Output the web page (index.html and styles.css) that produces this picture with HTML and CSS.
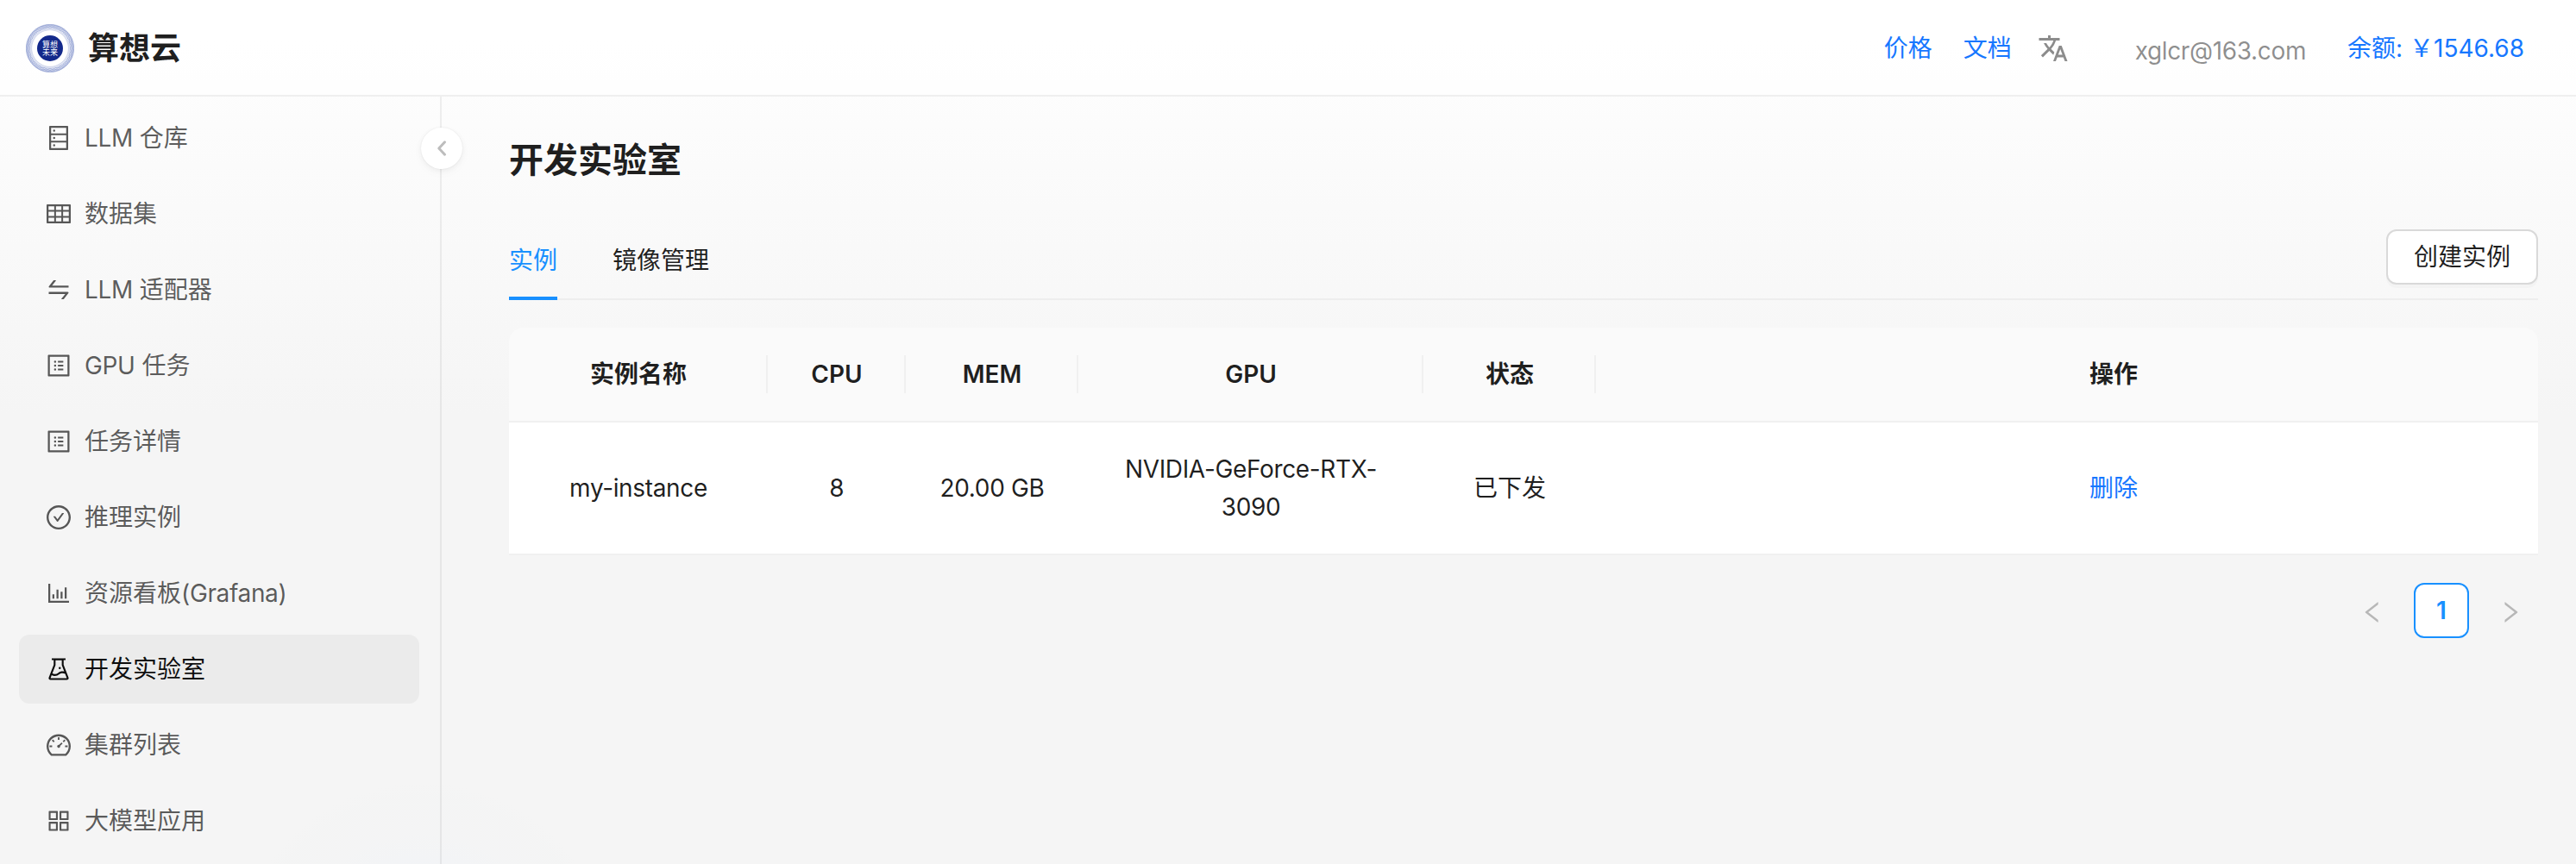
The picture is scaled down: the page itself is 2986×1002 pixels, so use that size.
FILE: index.html
```html
<!DOCTYPE html>
<html lang="zh-CN">
<head>
<meta charset="utf-8">
<title>开发实验室 - 算想云</title>
<link rel="stylesheet" href="styles.css">
</head>
<body>
<div class="layout">
  <header class="header">
    <a class="brand">
      <svg class="brand-logo" viewBox="0 0 56 56">
        <circle cx="28" cy="28" r="27.8" fill="#eef1fa"/>
        <g fill="none" stroke="#7485c4" stroke-width=".4">
          <ellipse cx="28" cy="28" rx="27.7" ry="21"/>
          <ellipse cx="28" cy="28" rx="27.7" ry="21" transform="rotate(15 28 28)"/>
          <ellipse cx="28" cy="28" rx="27.7" ry="21" transform="rotate(30 28 28)"/>
          <ellipse cx="28" cy="28" rx="27.7" ry="21" transform="rotate(45 28 28)"/>
          <ellipse cx="28" cy="28" rx="27.7" ry="21" transform="rotate(60 28 28)"/>
          <ellipse cx="28" cy="28" rx="27.7" ry="21" transform="rotate(75 28 28)"/>
          <ellipse cx="28" cy="28" rx="27.7" ry="21" transform="rotate(90 28 28)"/>
          <ellipse cx="28" cy="28" rx="27.7" ry="21" transform="rotate(105 28 28)"/>
          <ellipse cx="28" cy="28" rx="27.7" ry="21" transform="rotate(120 28 28)"/>
          <ellipse cx="28" cy="28" rx="27.7" ry="21" transform="rotate(135 28 28)"/>
          <ellipse cx="28" cy="28" rx="27.7" ry="21" transform="rotate(150 28 28)"/>
          <ellipse cx="28" cy="28" rx="27.7" ry="21" transform="rotate(165 28 28)"/>
        </g>
        <circle cx="28" cy="28" r="23.2" fill="#fff" opacity=".6"/>
        <circle cx="28" cy="28" r="20.8" fill="#fff"/>
        <circle cx="28" cy="28" r="15" fill="#13298b"/>
        <text class="brand-mark" x="28" y="26.6">算想</text>
        <text class="brand-mark" x="28" y="36.4">未来</text>
      </svg>
      <h1 class="brand-name">算想云</h1>
    </a>
    <nav class="header-actions">
      <a class="link">价格</a>
      <a class="link docs">文档</a>
      <svg class="lang" viewBox="0 0 24 24"><path d="M12.87 15.07l-2.54-2.51.03-.03c1.74-1.94 2.98-4.17 3.71-6.53H17V4h-7V2H8v2H1v1.99h11.17C11.5 7.92 10.44 9.75 9 11.35 8.07 10.32 7.3 9.19 6.69 8h-2c.73 1.63 1.73 3.17 2.98 4.56l-5.09 5.02L4 19l5-5 3.11 3.11.76-2.04zM18.5 10h-2L12 22h2l1.12-3h4.75L21 22h2l-4.5-12zm-2.62 7l1.62-4.33L19.12 17h-3.24z"/></svg>
      <span class="account latin">xglcr@163.com</span>
      <a class="link balance">余额: ￥1546.68</a>
    </nav>
  </header>
  <div class="body">
    <aside class="sider">
      <ul class="menu">
        <li class="menu-item"><svg class="icon" viewBox="64 64 896 896"><path d="M832 64H192c-17.7 0-32 14.3-32 32v832c0 17.7 14.3 32 32 32h640c17.7 0 32-14.3 32-32V96c0-17.7-14.3-32-32-32zm-600 72h560v208H232V136zm560 480H232V408h560v208zm0 272H232V680h560v208zM304 240a40 40 0 1080 0 40 40 0 10-80 0zm0 272a40 40 0 1080 0 40 40 0 10-80 0zm0 272a40 40 0 1080 0 40 40 0 10-80 0z"/></svg><span><span class="latin">LLM</span> 仓库</span></li>
        <li class="menu-item"><svg class="icon" viewBox="64 64 896 896"><path d="M928 160H96c-17.7 0-32 14.3-32 32v640c0 17.7 14.3 32 32 32h832c17.7 0 32-14.3 32-32V192c0-17.7-14.3-32-32-32zm-40 208H676V232h212v136zm0 224H676V432h212v160zM412 432h200v160H412V432zm200-64H412V232h200v136zm-476 64h212v160H136V432zm0-200h212v136H136V232zm0 424h212v136H136V656zm276 0h200v136H412V656zm476 136H676V656h212v136z"/></svg><span>数据集</span></li>
        <li class="menu-item"><svg class="icon" viewBox="64 64 896 896"><path d="M847.9 592H152c-4.4 0-8 3.6-8 8v60c0 4.4 3.6 8 8 8h605.2L612.9 851c-4.1 5.2-.4 13 6.3 13h72.5c4.9 0 9.5-2.2 12.6-6.1l168.8-214.1c16.5-21 1.6-51.8-25.2-51.8zM872 356H266.8l144.3-183c4.1-5.2.4-13-6.3-13h-72.5c-4.9 0-9.5 2.2-12.6 6.1L150.9 380.2c-16.5 21-1.6 51.8 25.1 51.8h696c4.4 0 8-3.6 8-8v-60c0-4.4-3.6-8-8-8z"/></svg><span><span class="latin">LLM</span> 适配器</span></li>
        <li class="menu-item"><svg class="icon" viewBox="64 64 896 896"><path d="M880 112H144c-17.7 0-32 14.3-32 32v736c0 17.7 14.3 32 32 32h736c17.7 0 32-14.3 32-32V144c0-17.7-14.3-32-32-32zm-40 728H184V184h656v656zM492 400h184c4.4 0 8-3.6 8-8v-48c0-4.4-3.6-8-8-8H492c-4.4 0-8 3.6-8 8v48c0 4.4 3.6 8 8 8zm0 144h184c4.4 0 8-3.6 8-8v-48c0-4.4-3.6-8-8-8H492c-4.4 0-8 3.6-8 8v48c0 4.4 3.6 8 8 8zm0 144h184c4.4 0 8-3.6 8-8v-48c0-4.4-3.6-8-8-8H492c-4.4 0-8 3.6-8 8v48c0 4.4 3.6 8 8 8zM340 368a40 40 0 1080 0 40 40 0 10-80 0zm0 144a40 40 0 1080 0 40 40 0 10-80 0zm0 144a40 40 0 1080 0 40 40 0 10-80 0z"/></svg><span><span class="latin">GPU</span> 任务</span></li>
        <li class="menu-item"><svg class="icon" viewBox="64 64 896 896"><path d="M880 112H144c-17.7 0-32 14.3-32 32v736c0 17.7 14.3 32 32 32h736c17.7 0 32-14.3 32-32V144c0-17.7-14.3-32-32-32zm-40 728H184V184h656v656zM492 400h184c4.4 0 8-3.6 8-8v-48c0-4.4-3.6-8-8-8H492c-4.4 0-8 3.6-8 8v48c0 4.4 3.6 8 8 8zm0 144h184c4.4 0 8-3.6 8-8v-48c0-4.4-3.6-8-8-8H492c-4.4 0-8 3.6-8 8v48c0 4.4 3.6 8 8 8zm0 144h184c4.4 0 8-3.6 8-8v-48c0-4.4-3.6-8-8-8H492c-4.4 0-8 3.6-8 8v48c0 4.4 3.6 8 8 8zM340 368a40 40 0 1080 0 40 40 0 10-80 0zm0 144a40 40 0 1080 0 40 40 0 10-80 0zm0 144a40 40 0 1080 0 40 40 0 10-80 0z"/></svg><span>任务详情</span></li>
        <li class="menu-item"><svg class="icon" viewBox="64 64 896 896"><path d="M699 353h-46.9c-10.2 0-19.9 4.9-25.9 13.3L469 584.3l-71.2-98.8c-6-8.3-15.6-13.3-25.9-13.3H325c-6.5 0-10.3 7.4-6.5 12.7l124.6 172.8a31.8 31.8 0 0051.7 0l210.6-292c3.9-5.3.1-12.7-6.4-12.7z"/><path d="M512 64C264.6 64 64 264.6 64 512s200.6 448 448 448 448-200.6 448-448S759.4 64 512 64zm0 820c-205.4 0-372-166.6-372-372s166.6-372 372-372 372 166.6 372 372-166.6 372-372 372z"/></svg><span>推理实例</span></li>
        <li class="menu-item"><svg class="icon" viewBox="64 64 896 896"><path d="M888 792H200V168c0-4.4-3.6-8-8-8h-56c-4.4 0-8 3.6-8 8v688c0 4.4 3.6 8 8 8h752c4.4 0 8-3.6 8-8v-56c0-4.4-3.6-8-8-8zm-600-80h56c4.4 0 8-3.6 8-8V560c0-4.4-3.6-8-8-8h-56c-4.4 0-8 3.6-8 8v144c0 4.4 3.6 8 8 8zm152 0h56c4.4 0 8-3.6 8-8V384c0-4.4-3.6-8-8-8h-56c-4.4 0-8 3.6-8 8v320c0 4.4 3.6 8 8 8zm152 0h56c4.4 0 8-3.6 8-8V462c0-4.4-3.6-8-8-8h-56c-4.4 0-8 3.6-8 8v242c0 4.4 3.6 8 8 8zm152 0h56c4.4 0 8-3.6 8-8V304c0-4.4-3.6-8-8-8h-56c-4.4 0-8 3.6-8 8v400c0 4.4 3.6 8 8 8z"/></svg><span>资源看板<span class="latin">(Grafana)</span></span></li>
        <li class="menu-item selected"><svg class="icon" viewBox="64 64 896 896"><path d="M512 472a40 40 0 1080 0 40 40 0 10-80 0zm367 352.9L696.3 352V178H768v-68H256v68h71.7v174L145 824.9c-2.8 7.4-4.3 15.2-4.3 23.1 0 35.3 28.7 64 64 64h614.6c7.9 0 15.7-1.5 23.1-4.3 33-12.7 49.4-49.8 36.6-82.8zM395.7 364.7V180h232.6v184.7L719.2 600c-20.7-5.3-42.1-8-63.9-8-61.2 0-119.2 21.5-165.3 60a188.78 188.78 0 01-121.3 43.9c-32.7 0-64.1-8.3-91.8-23.7l118.8-307.5zM210.5 844l41.7-107.8c35.7 18.1 75.4 27.8 116.6 27.8 61.2 0 119.2-21.5 165.3-60 33.9-28.2 76.3-43.9 121.3-43.9 35 0 68.4 9.5 97.6 27.1L813.5 844h-603z"/></svg><span>开发实验室</span></li>
        <li class="menu-item"><svg class="icon" viewBox="64 64 896 896"><path d="M924.8 385.6a446.7 446.7 0 00-96-142.4 446.7 446.7 0 00-142.4-96C631.1 123.8 572.5 112 512 112s-119.1 11.8-174.4 35.2a446.7 446.7 0 00-142.4 96 446.7 446.7 0 00-96 142.4C75.8 440.9 64 499.5 64 560c0 132.7 58.3 257.7 159.9 343.1l1.7 1.4c5.8 4.8 13.1 7.5 20.6 7.5h531.7c7.5 0 14.8-2.7 20.6-7.5l1.7-1.4C901.7 817.7 960 692.7 960 560c0-60.5-11.9-119.1-35.2-174.4zM761.4 836H262.6A371.12 371.12 0 01140 560c0-99.4 38.7-192.8 109-263 70.3-70.3 163.7-109 263-109 99.4 0 192.8 38.7 263 109 70.3 70.3 109 163.7 109 263 0 105.6-44.5 205.5-122.6 276zM623.5 421.5a8.03 8.03 0 00-11.3 0L527.7 506c-18.7-5-39.4-.2-54.1 14.5a55.95 55.95 0 000 79.2 55.95 55.95 0 0079.2 0 55.87 55.87 0 0014.5-54.1l84.5-84.5c3.1-3.1 3.1-8.2 0-11.3l-28.3-28.3zM490 320h44c4.4 0 8-3.6 8-8v-80c0-4.4-3.6-8-8-8h-44c-4.4 0-8 3.6-8 8v80c0 4.4 3.6 8 8 8zm260 218v44c0 4.4 3.6 8 8 8h80c4.4 0 8-3.6 8-8v-44c0-4.4-3.6-8-8-8h-80c-4.4 0-8 3.6-8 8zm12.7-197.2l-31.1-31.1a8.03 8.03 0 00-11.3 0l-56.6 56.6a8.03 8.03 0 000 11.3l31.1 31.1c3.1 3.1 8.2 3.1 11.3 0l56.6-56.6c3.1-3.1 3.1-8.2 0-11.3zm-458.6-31.1a8.03 8.03 0 00-11.3 0l-31.1 31.1a8.03 8.03 0 000 11.3l56.6 56.6c3.1 3.1 8.2 3.1 11.3 0l31.1-31.1c3.1-3.1 3.1-8.2 0-11.3l-56.6-56.6zM262 530h-80c-4.4 0-8 3.6-8 8v44c0 4.4 3.6 8 8 8h80c4.4 0 8-3.6 8-8v-44c0-4.4-3.6-8-8-8z"/></svg><span>集群列表</span></li>
        <li class="menu-item"><svg class="icon" viewBox="64 64 896 896"><path d="M464 144H160c-8.8 0-16 7.2-16 16v304c0 8.8 7.2 16 16 16h304c8.8 0 16-7.2 16-16V160c0-8.8-7.2-16-16-16zm-52 268H212V212h200v200zm452-268H560c-8.8 0-16 7.2-16 16v304c0 8.8 7.2 16 16 16h304c8.8 0 16-7.2 16-16V160c0-8.8-7.2-16-16-16zm-52 268H612V212h200v200zM464 544H160c-8.8 0-16 7.2-16 16v304c0 8.8 7.2 16 16 16h304c8.8 0 16-7.2 16-16V560c0-8.8-7.2-16-16-16zm-52 268H212V612h200v200zm452-268H560c-8.8 0-16 7.2-16 16v304c0 8.8 7.2 16 16 16h304c8.8 0 16-7.2 16-16V560c0-8.8-7.2-16-16-16zm-52 268H612V612h200v200z"/></svg><span>大模型应用</span></li>
      </ul>
      <button class="collapse" aria-label="收起"><svg viewBox="0 0 24 24"><path d="M15.5 4.8L8.8 12l6.7 7.2"/></svg></button>
    </aside>
    <main class="content">
      <h2 class="page-title">开发实验室</h2>
      <div class="tabs">
        <div class="tab active">实例</div>
        <div class="tab">镜像管理</div>
        <button class="create">创建实例</button>
      </div>
      <table class="table">
        <colgroup><col class="c300"><col class="c160"><col class="c200"><col class="c400"><col class="c200"><col></colgroup>
        <thead><tr><th>实例名称</th><th>CPU</th><th>MEM</th><th>GPU</th><th>状态</th><th class="action">操作</th></tr></thead>
        <tbody><tr><td class="latin">my-instance</td><td>8</td><td class="latin">20.00 GB</td><td class="latin">NVIDIA-GeForce-RTX-3090</td><td>已下发</td><td class="action"><a class="link">删除</a></td></tr></tbody>
      </table>
      <div class="pagination">
        <span class="page-nav"><svg viewBox="64 64 896 896"><path d="M724 218.3V141c0-6.7-7.7-10.4-12.9-6.3L260.3 486.8a31.86 31.86 0 000 50.3l450.8 352.1c5.3 4.1 12.9.4 12.9-6.3v-77.3c0-4.9-2.3-9.6-6.1-12.6l-360-281 360-281.1c3.8-3 6.1-7.7 6.1-12.6z"/></svg></span>
        <span class="page-current">1</span>
        <span class="page-nav"><svg viewBox="64 64 896 896"><path d="M765.7 486.8L314.9 134.7A7.97 7.97 0 00302 141v77.3c0 4.9 2.3 9.6 6.1 12.6l360 281.1-360 281.1c-3.9 3-6.1 7.7-6.1 12.6V883c0 6.7 7.7 10.4 12.9 6.3l450.8-352.1a31.96 31.96 0 000-50.4z"/></svg></span>
      </div>
    </main>
  </div>
</div>
</body>
</html>
```
FILE: styles.css
```css
* { box-sizing: border-box; }
body {
  margin: 0;
  font-family: Inter, "Noto Sans CJK SC", sans-serif;
  font-size: 28px;
  line-height: 44px;
  color: rgba(0, 0, 0, .88);
}
h1, h2, ul { margin: 0; padding: 0; }
button { font: inherit; color: inherit; padding: 0; }
.latin { letter-spacing: -.35px; }
.layout {
  display: flex;
  flex-direction: column;
  height: 1002px;
  overflow: hidden;
  background:
    radial-gradient(circle 218px at 490px 1125px, rgba(240, 243, 248, .6) 50%, rgba(243, 244, 245, .5) 72%, rgba(243, 244, 244, .5) 92%, rgba(245, 245, 245, 0)),
    linear-gradient(#fff, #f5f5f5 481px);
}
.link { color: #1677ff; }

.header {
  flex: none;
  display: flex;
  align-items: center;
  justify-content: space-between;
  height: 112px;
  padding: 0 60px 0 30px;
  background: rgba(255, 255, 255, .6);
  border-bottom: 2px solid rgba(5, 5, 5, .06);
}
.brand { display: flex; align-items: center; gap: 16px; padding-top: 2px; }
.brand-logo { width: 56px; height: 56px; }
.brand-mark { font-size: 9px; fill: #fff; text-anchor: middle; }
.brand-name { font-size: 36px; font-weight: 600; line-height: 56px; }
.header-actions { display: flex; align-items: center; padding-top: 2px; }
.docs { margin-left: 36px; }
.lang { width: 36px; height: 36px; margin-left: 30px; fill: #8c8c8c; }
.account { margin: 6px 0 0 77px; color: rgba(0, 0, 0, .45); }
.balance { margin-left: 48px; }

.body { flex: 1; display: flex; min-height: 0; }
.sider {
  position: relative;
  flex: none;
  width: 512px;
  padding: 8px 24px 0 22px;
  border-right: 2px solid rgba(5, 5, 5, .06);
}
.menu { display: flex; flex-direction: column; gap: 8px; list-style: none; }
.menu-item {
  display: flex;
  align-items: center;
  gap: 16px;
  height: 80px;
  padding: 0 32px;
  border-radius: 12px;
  color: rgba(0, 0, 0, .65);
}
.menu-item.selected { background: rgba(0, 0, 0, .04); color: rgba(0, 0, 0, .95); }
.icon { width: 28px; height: 28px; fill: currentColor; }
.collapse {
  position: absolute;
  top: 36px;
  right: -26px;
  display: grid;
  place-items: center;
  width: 48px;
  height: 48px;
  border: 0;
  border-radius: 50%;
  background: #fff;
  box-shadow: 0 4px 16px -4px rgba(0, 0, 0, .05), 0 2px 8px -2px rgba(25, 15, 15, .07), 0 0 2px rgba(0, 0, 0, .08);
}
.collapse svg { width: 24px; height: 24px; fill: none; stroke: #bdbdbd; stroke-width: 3; stroke-linecap: round; stroke-linejoin: round; }

.content { flex: 1; padding: 42px 44px 0 78px; }
.page-title { font-size: 40px; font-weight: 600; line-height: 64px; }
.tabs {
  display: flex;
  gap: 64px;
  height: 92px;
  margin: 38px 0 32px;
  border-bottom: 2px solid rgba(5, 5, 5, .04);
}
.tab { height: 92px; padding-top: 24px; }
.tab.active { color: #1890ff; border-bottom: 4px solid #1890ff; }
.create {
  width: 176px;
  height: 64px;
  margin: 10px 0 0 auto;
  border: 2px solid #d9d9d9;
  border-radius: 12px;
  background: #fff;
  box-shadow: 0 4px 0 rgba(0, 0, 0, .02);
}

.table { width: 100%; table-layout: fixed; border-collapse: separate; border-spacing: 0; text-align: center; }
.c300 { width: 300px; }
.c160 { width: 160px; }
.c200 { width: 200px; }
.c400 { width: 400px; }
th, td { padding: 32px; border-bottom: 2px solid #f0f0f0; }
th {
  padding: 32px 0;
  font-weight: 600;
  background: linear-gradient(#f0f0f0, #f0f0f0) right center / 2px 44px no-repeat #fafafa;
}
th:first-child { border-top-left-radius: 16px; }
th:last-child { border-top-right-radius: 16px; background-image: none; }
td { background: #fff; }
td:nth-child(3) { padding-inline: 0; }
.action { padding-left: 108px; padding-right: 0; }

.pagination { display: flex; justify-content: flex-end; gap: 16px; margin-top: 32px; }
.page-nav, .page-current { display: grid; place-items: center; width: 64px; height: 64px; }
.page-nav svg { width: 28px; height: 28px; margin-top: 4px; fill: rgba(0, 0, 0, .25); }
.page-current { border: 2px solid #1890ff; border-radius: 12px; background: #fff; color: #1890ff; font-weight: 600; }
```
